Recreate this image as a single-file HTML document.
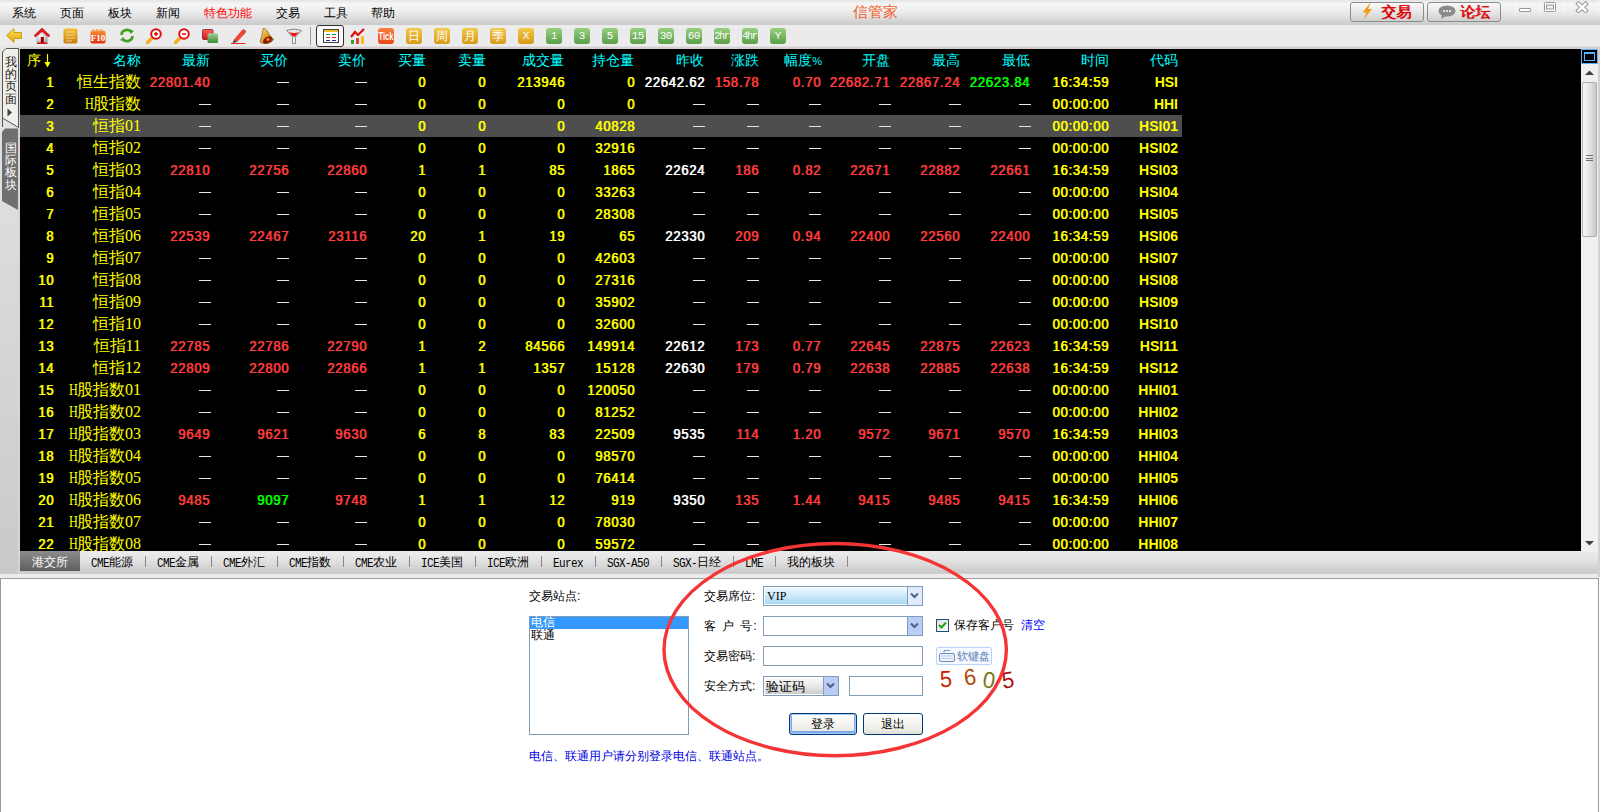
<!DOCTYPE html><html><head><meta charset="utf-8"><style>
*{margin:0;padding:0;box-sizing:border-box}
html,body{width:1600px;height:812px;overflow:hidden;background:#ebebeb;font-family:"Liberation Sans",sans-serif;font-size:12px;color:#000}
.a{position:absolute;white-space:nowrap}
.r{position:absolute;white-space:nowrap;text-align:right}
.num{font-family:"Liberation Sans",sans-serif;font-size:13px;letter-spacing:0.77px;transform:scaleY(1.1);transform-origin:100% 55%}
.dot{margin:0}
.cd{font-family:"Liberation Sans",sans-serif;font-weight:bold;font-size:14px}
.lt{font-family:"Liberation Serif",serif}
.hh{display:inline-block;width:8.5px}
.hh span{display:inline-block;transform:scaleX(0.76);transform-origin:0 50%}
.tl{font-family:"Liberation Mono",monospace;font-size:11px;letter-spacing:-0.6px;display:inline-block;transform:scaleY(1.2);font-weight:normal}
.nm{font-size:16px}
.dash{position:absolute;width:12px;height:1px;background:#e6e6e6}
.hd{font-size:14px;color:#00ffff}
</style></head><body>
<div class="a" style="left:0;top:0;width:1600px;height:25px;background:linear-gradient(#e4e4e4 0px,#f6f6f6 4px,#ececec 12px,#cacaca 25px)"></div>
<div class="a" style="left:12px;top:5px;line-height:16px;font-size:12px;color:#000">系统</div>
<div class="a" style="left:60px;top:5px;line-height:16px;font-size:12px;color:#000">页面</div>
<div class="a" style="left:108px;top:5px;line-height:16px;font-size:12px;color:#000">板块</div>
<div class="a" style="left:156px;top:5px;line-height:16px;font-size:12px;color:#000">新闻</div>
<div class="a" style="left:204px;top:5px;line-height:16px;font-size:12px;color:#ff0000">特色功能</div>
<div class="a" style="left:276px;top:5px;line-height:16px;font-size:12px;color:#000">交易</div>
<div class="a" style="left:324px;top:5px;line-height:16px;font-size:12px;color:#000">工具</div>
<div class="a" style="left:371px;top:5px;line-height:16px;font-size:12px;color:#000">帮助</div>
<div class="a" style="left:853px;top:3px;line-height:18px;font-size:15.4px;color:#f0602a">信管家</div>
<div class="a" style="left:1350px;top:2px;width:74px;height:20px;border:1px solid #8c8c8c;border-radius:3px;background:linear-gradient(#fafafa,#e6e6e6 50%,#cfcfcf)"></div>
<svg class="a" style="left:1361px;top:3px" width="12" height="17" viewBox="0 0 12 17"><path d="M9 0 L1.5 9.5 L5.5 9.5 L2.5 16.5 L11 6 L7 6 L9.5 0 Z" fill="#f59a1a"/></svg>
<div class="a" style="left:1381px;top:3px;line-height:18px;font-size:15px;font-weight:normal;color:#dd0000;text-shadow:0.6px 0 0 #dd0000;letter-spacing:0px">交易</div>
<div class="a" style="left:1427px;top:2px;width:74px;height:20px;border:1px solid #8c8c8c;border-radius:3px;background:linear-gradient(#fafafa,#e6e6e6 50%,#cfcfcf)"></div>
<svg class="a" style="left:1438px;top:5px" width="18" height="14" viewBox="0 0 18 14"><ellipse cx="9" cy="6" rx="8.5" ry="5.5" fill="#8a8a8a"/><path d="M4 10 L3 14 L8 11 Z" fill="#8a8a8a"/><circle cx="6" cy="6" r="1" fill="#fff"/><circle cx="9" cy="6" r="1" fill="#fff"/><circle cx="12" cy="6" r="1" fill="#fff"/></svg>
<div class="a" style="left:1460px;top:3px;line-height:18px;font-size:15px;font-weight:normal;color:#dd0000;text-shadow:0.6px 0 0 #dd0000;letter-spacing:0px">论坛</div>
<div class="a" style="left:1515px;top:0;width:1px;height:19px;background:linear-gradient(#fafafa,#f0f0f0 70%,rgba(240,240,240,0))"></div>
<div class="a" style="left:1539px;top:0;width:1px;height:19px;background:linear-gradient(#fafafa,#f0f0f0 70%,rgba(240,240,240,0))"></div>
<div class="a" style="left:1564px;top:0;width:1px;height:19px;background:linear-gradient(#fafafa,#f0f0f0 70%,rgba(240,240,240,0))"></div>
<div class="a" style="left:1598px;top:0;width:1px;height:19px;background:linear-gradient(#fafafa,#f0f0f0 70%,rgba(240,240,240,0))"></div>
<div class="a" style="left:1519px;top:8px;width:12px;height:4px;border:1px solid #999;border-radius:1px;background:#fff"></div>
<svg class="a" style="left:1543px;top:1px" width="14" height="12" viewBox="0 0 14 12"><rect x="1.5" y="1.5" width="11" height="9" rx="0.8" fill="#fff" stroke="#999" stroke-width="1"/><rect x="3.5" y="4" width="7" height="4" fill="#eee" stroke="#999" stroke-width="1"/></svg>
<svg class="a" style="left:1575px;top:1px" width="14" height="12" viewBox="0 0 14 12"><path d="M3.5 3 L10.5 9.5 M10.5 3 L3.5 9.5" stroke="#999" stroke-width="4.6" stroke-linecap="square"/><path d="M3.5 3 L10.5 9.5 M10.5 3 L3.5 9.5" stroke="#fff" stroke-width="2.6" stroke-linecap="square"/></svg>
<div class="a" style="left:0;top:25px;width:1600px;height:22px;background:#ebebeb"></div>
<div class="a" style="left:0;top:46px;width:1600px;height:1px;background:#e2e2e2"></div>
<div class="a" style="left:0;top:47px;width:1600px;height:2px;background:#d6cece"></div>
<svg class="a" style="left:6px;top:28px" width="16" height="16" viewBox="0 0 16 16"><defs><linearGradient id="gy" x1="0" y1="0" x2="0" y2="1"><stop offset="0" stop-color="#ffe060"/><stop offset="1" stop-color="#e0a800"/></linearGradient></defs><path d="M0.5 7.5 L8 0.5 L8 4.5 L15.5 4.5 L15.5 10.5 L8 10.5 L8 14.5 Z" fill="url(#gy)" stroke="#c89000" stroke-width="0.8"/></svg>
<svg class="a" style="left:34px;top:28px" width="16" height="16" viewBox="0 0 16 16"><defs><radialGradient id="hw" cx="0.4" cy="0.4" r="0.7"><stop offset="0" stop-color="#ffffff"/><stop offset="1" stop-color="#a8a8a8"/></radialGradient></defs><path d="M2.5 8 L8 3 L13.5 8 L13.5 15 L2.5 15 Z" fill="url(#hw)"/><path d="M0 7.5 L8 0 L16 7.5 L14.5 9 L8 3.5 L1.5 9 Z" fill="#e41c1c" stroke="#b00000" stroke-width="0.5"/><rect x="6.8" y="9" width="3" height="6" fill="#a00000"/><path d="M3 14.5 H13.5 V16 H3Z" fill="#d01818"/></svg>
<svg class="a" style="left:63px;top:28px" width="16" height="16" viewBox="0 0 16 16"><defs><linearGradient id="go" x1="0" y1="0" x2="0" y2="1"><stop offset="0" stop-color="#f4c030"/><stop offset="1" stop-color="#c87a10"/></linearGradient></defs><rect x="0.5" y="0.5" width="14" height="15" rx="2" fill="url(#go)"/><path d="M3 4h9M3 7h9M3 10h9M3 13h6" stroke="#fff6d0" stroke-width="0.8" opacity="0.8"/></svg>
<svg class="a" style="left:90px;top:28px" width="16" height="16" viewBox="0 0 16 16"><defs><linearGradient id="gr" x1="0" y1="0" x2="0" y2="1"><stop offset="0" stop-color="#f89030"/><stop offset="1" stop-color="#e03010"/></linearGradient></defs><rect x="0.5" y="2.5" width="15" height="13" rx="2" fill="url(#gr)"/><path d="M3 1v3M7 1v3M11 1v3" stroke="#f0a040" stroke-width="1.4"/><text x="8" y="13" font-family="Liberation Serif" font-weight="bold" font-size="9" fill="#fff" text-anchor="middle">F10</text></svg>
<svg class="a" style="left:119px;top:28px" width="16" height="16" viewBox="0 0 16 16"><path d="M2.5 7 A5.5 5 0 0 1 12 3.5" stroke="#40a020" stroke-width="2.6" fill="none"/><path d="M13.5 8 A5.5 5 0 0 1 4 11.5" stroke="#40a020" stroke-width="2.6" fill="none"/><path d="M10 1 L15 3 L11.5 6Z" fill="#40a020"/><path d="M6 14 L1 12 L4.5 9Z" fill="#40a020"/></svg>
<svg class="a" style="left:146px;top:28px" width="16" height="16" viewBox="0 0 16 16"><path d="M1 15 L6 10" stroke="#f0b020" stroke-width="3.5" stroke-linecap="round"/><circle cx="10" cy="6" r="4.8" fill="#fff" stroke="#e01010" stroke-width="2"/><path d="M8 6h4" stroke="#e01010" stroke-width="1.6"/><path d="M10 4v4" stroke="#e01010" stroke-width="1.6"/></svg>
<svg class="a" style="left:174px;top:28px" width="16" height="16" viewBox="0 0 16 16"><path d="M1 15 L6 10" stroke="#f0b020" stroke-width="3.5" stroke-linecap="round"/><circle cx="10" cy="6" r="4.8" fill="#fff" stroke="#e01010" stroke-width="2"/><path d="M8 6h4" stroke="#e01010" stroke-width="1.6"/></svg>
<svg class="a" style="left:202px;top:29px" width="17" height="15" viewBox="0 0 17 15"><defs><linearGradient id="wr" x1="0" y1="0" x2="0" y2="1"><stop offset="0" stop-color="#ff6060"/><stop offset="1" stop-color="#d01010"/></linearGradient><linearGradient id="wg" x1="0" y1="0" x2="0" y2="1"><stop offset="0" stop-color="#a8d098"/><stop offset="1" stop-color="#3a8a30"/></linearGradient></defs><rect x="0.5" y="0.5" width="10.5" height="10" rx="1" fill="url(#wr)" stroke="#801010" stroke-width="0.7"/><rect x="5.5" y="4.2" width="10.5" height="9.8" rx="1.5" fill="url(#wg)"/></svg>
<svg class="a" style="left:231px;top:28px" width="16" height="16" viewBox="0 0 16 16"><path d="M3 12 L11.5 2 Q12.5 1 13.5 2 L14.5 3 Q15 4 14 5 L5.5 14 Z" fill="#f04838" stroke="#d02010" stroke-width="0.6"/><path d="M3 12 L5.5 14 L1.5 15 Z" fill="#303040"/><rect x="0" y="15" width="14.5" height="1" fill="#ff2020"/></svg>
<svg class="a" style="left:259px;top:28px" width="16" height="16" viewBox="0 0 16 16"><defs><linearGradient id="gb" x1="0" y1="0" x2="1" y2="1"><stop offset="0" stop-color="#ffe070"/><stop offset="0.6" stop-color="#d89020"/><stop offset="1" stop-color="#803000"/></linearGradient></defs><path d="M4 0.5 L6 0.5 Q8 2 10 6 L14.5 11.5 Q12 16 4 15.5 L1 14 Q3 8 4 0.5Z" fill="url(#gb)" stroke="#604000" stroke-width="0.5"/><ellipse cx="8.5" cy="12" rx="5" ry="3" transform="rotate(-35 8.5 12)" fill="#901800"/><circle cx="9" cy="11.5" r="1.4" fill="#f0a030"/></svg>
<svg class="a" style="left:286px;top:28px" width="16" height="16" viewBox="0 0 16 16"><path d="M0.5 2.5 Q8 -0.5 15.5 2.5 L9.5 9 L9.5 15.5 L6.5 15.5 L6.5 9 Z" fill="#e8e8e8" stroke="#707070" stroke-width="0.8"/><path d="M3 4 Q8 6 13 4 L9 8.5 L7 8.5Z" fill="#f01010"/><rect x="7.3" y="9" width="1.4" height="6" fill="#ffffff"/></svg>
<div class="a" style="left:310px;top:27px;width:1px;height:18px;background:#9a9a9a"></div>
<div class="a" style="left:316px;top:25px;width:28px;height:22px;border:1px solid #303030;border-radius:3px;background:#fafafa"></div>
<svg class="a" style="left:323px;top:29px" width="16" height="15" viewBox="0 0 16 15"><rect x="0.5" y="0.5" width="15" height="13" fill="#fff" stroke="#404040" stroke-width="1"/><rect x="1" y="1" width="14" height="2" fill="#f0c020"/><path d="M3 5.5h4M9 5.5h4" stroke="#20a020" stroke-width="1"/><path d="M3 8.5h4M9 8.5h4" stroke="#e02020" stroke-width="1"/><path d="M3 11.5h4M9 11.5h4" stroke="#2030a0" stroke-width="1"/></svg>
<svg class="a" style="left:350px;top:28px" width="16" height="16" viewBox="0 0 16 16"><path d="M1 9 L5 4 L8 7 L14 1" stroke="#e01010" stroke-width="2.2" fill="none"/><rect x="1" y="12" width="3" height="4" fill="#30a030"/><rect x="6" y="10" width="3" height="6" fill="#e04040"/><rect x="11" y="8" width="3" height="8" fill="#f0c020"/></svg>
<svg class="a" style="left:378px;top:28px" width="16" height="16" viewBox="0 0 16 16"><defs><linearGradient id="gt" x1="0" y1="0" x2="0" y2="1"><stop offset="0" stop-color="#f88040"/><stop offset="1" stop-color="#e84818"/></linearGradient></defs><rect x="0" y="0" width="16" height="16" rx="3" fill="url(#gt)"/><text x="8" y="12" font-family="Liberation Sans" font-weight="bold" font-size="10" fill="#fff" text-anchor="middle" textLength="15" lengthAdjust="spacingAndGlyphs">Tick</text></svg>
<div class="a" style="left:406px;top:28px;width:16px;height:16px;border-radius:3px;background:linear-gradient(#f2c848,#d89a18);color:#fff;font-family:'Liberation Sans';font-size:12px;line-height:16px;overflow:hidden;text-align:center;letter-spacing:0;text-indent:0">日</div>
<div class="a" style="left:434px;top:28px;width:16px;height:16px;border-radius:3px;background:linear-gradient(#f2c848,#d89a18);color:#fff;font-family:'Liberation Sans';font-size:12px;line-height:16px;overflow:hidden;text-align:center;letter-spacing:0;text-indent:0">周</div>
<div class="a" style="left:462px;top:28px;width:16px;height:16px;border-radius:3px;background:linear-gradient(#f2c848,#d89a18);color:#fff;font-family:'Liberation Sans';font-size:12px;line-height:16px;overflow:hidden;text-align:center;letter-spacing:0;text-indent:0">月</div>
<div class="a" style="left:490px;top:28px;width:16px;height:16px;border-radius:3px;background:linear-gradient(#f2c848,#d89a18);color:#fff;font-family:'Liberation Sans';font-size:12px;line-height:16px;overflow:hidden;text-align:center;letter-spacing:0;text-indent:0">季</div>
<div class="a" style="left:518px;top:28px;width:16px;height:16px;border-radius:3px;background:linear-gradient(#f2c848,#d89a18);color:#fff;font-family:'Liberation Mono';font-size:11px;line-height:16px;overflow:hidden;text-align:center;letter-spacing:-0.6px;text-indent:-0.6px">X</div>
<div class="a" style="left:546px;top:28px;width:16px;height:16px;border-radius:3px;background:linear-gradient(#98d080,#5a9e48);color:#fff;font-family:'Liberation Mono';font-size:11px;line-height:16px;overflow:hidden;text-align:center;letter-spacing:-0.6px;text-indent:-0.6px">1</div>
<div class="a" style="left:574px;top:28px;width:16px;height:16px;border-radius:3px;background:linear-gradient(#98d080,#5a9e48);color:#fff;font-family:'Liberation Mono';font-size:11px;line-height:16px;overflow:hidden;text-align:center;letter-spacing:-0.6px;text-indent:-0.6px">3</div>
<div class="a" style="left:602px;top:28px;width:16px;height:16px;border-radius:3px;background:linear-gradient(#98d080,#5a9e48);color:#fff;font-family:'Liberation Mono';font-size:11px;line-height:16px;overflow:hidden;text-align:center;letter-spacing:-0.6px;text-indent:-0.6px">5</div>
<div class="a" style="left:630px;top:28px;width:16px;height:16px;border-radius:3px;background:linear-gradient(#98d080,#5a9e48);color:#fff;font-family:'Liberation Mono';font-size:11px;line-height:16px;overflow:hidden;text-align:center;letter-spacing:-0.6px;text-indent:-0.6px">15</div>
<div class="a" style="left:658px;top:28px;width:16px;height:16px;border-radius:3px;background:linear-gradient(#98d080,#5a9e48);color:#fff;font-family:'Liberation Mono';font-size:11px;line-height:16px;overflow:hidden;text-align:center;letter-spacing:-0.6px;text-indent:-0.6px">30</div>
<div class="a" style="left:686px;top:28px;width:16px;height:16px;border-radius:3px;background:linear-gradient(#98d080,#5a9e48);color:#fff;font-family:'Liberation Mono';font-size:11px;line-height:16px;overflow:hidden;text-align:center;letter-spacing:-0.6px;text-indent:-0.6px">60</div>
<div class="a" style="left:714px;top:28px;width:16px;height:16px;border-radius:3px;background:linear-gradient(#98d080,#5a9e48);color:#fff;font-family:'Liberation Mono';font-size:10px;line-height:18px;overflow:hidden;text-align:center;letter-spacing:-1.3px;text-indent:-1.3px">2hr</div>
<div class="a" style="left:742px;top:28px;width:16px;height:16px;border-radius:3px;background:linear-gradient(#98d080,#5a9e48);color:#fff;font-family:'Liberation Mono';font-size:10px;line-height:18px;overflow:hidden;text-align:center;letter-spacing:-1.3px;text-indent:-1.3px">4hr</div>
<div class="a" style="left:770px;top:28px;width:16px;height:16px;border-radius:3px;background:linear-gradient(#98d080,#5a9e48);color:#fff;font-family:'Liberation Mono';font-size:11px;line-height:16px;overflow:hidden;text-align:center;letter-spacing:-0.6px;text-indent:-0.6px">Y</div>
<div class="a" style="left:0;top:47px;width:19px;height:528px;background:linear-gradient(#e6e6e6,#dcdcdc 35%,#c9c9c9)"></div>
<div class="a" style="left:18px;top:47px;width:2px;height:528px;background:#dcd2d2"></div>
<svg class="a" style="left:1px;top:47px" width="18" height="82" viewBox="0 0 18 82"><path d="M1.5 80 L1.5 5 L5 1.5 L17.5 1.5 L17.5 80.5 L1.5 71 Z" fill="#f0efe8" stroke="#555" stroke-width="1"/></svg>
<div class="a" style="left:5px;top:56px;width:12px;font-size:12px;line-height:12.2px;color:#1a1a1a;white-space:normal;word-break:break-all">我的页面</div>
<svg class="a" style="left:7px;top:108px" width="6" height="9" viewBox="0 0 6 9"><path d="M0.5 0.5 L5 4.5 L0.5 8.5Z" fill="#404040"/></svg>
<svg class="a" style="left:1px;top:128px" width="18" height="84" viewBox="0 0 18 84"><path d="M1 4 L4 0.5 L17 0.5 L17 82 L1 73 Z" fill="#6f6f6f"/></svg>
<div class="a" style="left:5px;top:142px;width:12px;font-size:12px;line-height:12.2px;color:#fff;white-space:normal;word-break:break-all">国际板块</div>
<div class="a" style="left:20px;top:49px;width:1578px;height:502px;background:#000"></div>
<div class="a" style="left:1598px;top:47px;width:2px;height:530px;background:#d8d0d0"></div>
<div class="a" style="left:20px;top:115px;width:1162px;height:22px;background:#4e4e4e"></div>
<div class="a hd" style="left:27px;top:50px;line-height:20px;color:#ffff00">序</div>
<svg class="a" style="left:44px;top:54px" width="7" height="14" viewBox="0 0 7 14"><path d="M3.5 0 V12" stroke="#ffff00" stroke-width="1.2"/><path d="M0.5 8 L3.5 13.5 L6.5 8Z" fill="#ffff00"/></svg>
<div class="r hd" style="right:1459px;top:50px;line-height:20px">名称</div>
<div class="r hd" style="right:1390px;top:50px;line-height:20px">最新</div>
<div class="r hd" style="right:1312px;top:50px;line-height:20px">买价</div>
<div class="r hd" style="right:1234px;top:50px;line-height:20px">卖价</div>
<div class="r hd" style="right:1174px;top:50px;line-height:20px">买量</div>
<div class="r hd" style="right:1114px;top:50px;line-height:20px">卖量</div>
<div class="r hd" style="right:1036px;top:50px;line-height:20px">成交量</div>
<div class="r hd" style="right:966px;top:50px;line-height:20px">持仓量</div>
<div class="r hd" style="right:896px;top:50px;line-height:20px">昨收</div>
<div class="r hd" style="right:841px;top:50px;line-height:20px">涨跌</div>
<div class="r hd" style="right:779px;top:50px;line-height:20px">幅度<span style="font-size:11px;letter-spacing:-1px">%</span></div>
<div class="r hd" style="right:710px;top:50px;line-height:20px">开盘</div>
<div class="r hd" style="right:640px;top:50px;line-height:20px">最高</div>
<div class="r hd" style="right:570px;top:50px;line-height:20px">最低</div>
<div class="r hd" style="right:491px;top:50px;line-height:20px">时间</div>
<div class="r hd" style="right:422px;top:50px;line-height:20px">代码</div>
<div class="r num" style="right:1546px;top:72px;line-height:22px;color:#ffff00;text-shadow:0.7px 0 0 #ffff00">1</div>
<div class="r nm" style="right:1459px;top:71px;line-height:22px;color:#ffff00">恒生指数</div>
<div class="r num" style="right:1390px;top:72px;line-height:22px;color:#ff3c3c;text-shadow:0.7px 0 0 #ff3c3c">22801.40</div>
<div class="dash" style="left:277px;top:82px"></div>
<div class="dash" style="left:355px;top:82px"></div>
<div class="r num" style="right:1174px;top:72px;line-height:22px;color:#ffff00;text-shadow:0.7px 0 0 #ffff00">0</div>
<div class="r num" style="right:1114px;top:72px;line-height:22px;color:#ffff00;text-shadow:0.7px 0 0 #ffff00">0</div>
<div class="r num" style="right:1035px;top:72px;line-height:22px;color:#ffff00;text-shadow:0.7px 0 0 #ffff00">213946</div>
<div class="r num" style="right:965px;top:72px;line-height:22px;color:#ffff00;text-shadow:0.7px 0 0 #ffff00">0</div>
<div class="r num" style="right:895px;top:72px;line-height:22px;color:#ffffff;text-shadow:0.7px 0 0 #ffffff">22642.62</div>
<div class="r num" style="right:841px;top:72px;line-height:22px;color:#ff3c3c;text-shadow:0.7px 0 0 #ff3c3c">158.78</div>
<div class="r num" style="right:779px;top:72px;line-height:22px;color:#ff3c3c;text-shadow:0.7px 0 0 #ff3c3c">0.70</div>
<div class="r num" style="right:710px;top:72px;line-height:22px;color:#ff3c3c;text-shadow:0.7px 0 0 #ff3c3c">22682.71</div>
<div class="r num" style="right:640px;top:72px;line-height:22px;color:#ff3c3c;text-shadow:0.7px 0 0 #ff3c3c">22867.24</div>
<div class="r num" style="right:570px;top:72px;line-height:22px;color:#00ff00;text-shadow:0.7px 0 0 #00ff00">22623.84</div>
<div class="r num" style="right:491px;top:72px;line-height:22px;color:#ffff00;text-shadow:0.7px 0 0 #ffff00">16:34:59</div>
<div class="r cd" style="right:422px;top:71px;line-height:22px;color:#ffff00">HSI</div>
<div class="r num" style="right:1546px;top:94px;line-height:22px;color:#ffff00;text-shadow:0.7px 0 0 #ffff00">2</div>
<div class="r nm" style="right:1459px;top:93px;line-height:22px;color:#ffff00"><span class="lt hh"><span>H</span></span>股指数</div>
<div class="dash" style="left:199px;top:104px"></div>
<div class="dash" style="left:277px;top:104px"></div>
<div class="dash" style="left:355px;top:104px"></div>
<div class="r num" style="right:1174px;top:94px;line-height:22px;color:#ffff00;text-shadow:0.7px 0 0 #ffff00">0</div>
<div class="r num" style="right:1114px;top:94px;line-height:22px;color:#ffff00;text-shadow:0.7px 0 0 #ffff00">0</div>
<div class="r num" style="right:1035px;top:94px;line-height:22px;color:#ffff00;text-shadow:0.7px 0 0 #ffff00">0</div>
<div class="r num" style="right:965px;top:94px;line-height:22px;color:#ffff00;text-shadow:0.7px 0 0 #ffff00">0</div>
<div class="dash" style="left:693px;top:104px"></div>
<div class="dash" style="left:747px;top:104px"></div>
<div class="dash" style="left:809px;top:104px"></div>
<div class="dash" style="left:879px;top:104px"></div>
<div class="dash" style="left:949px;top:104px"></div>
<div class="dash" style="left:1019px;top:104px"></div>
<div class="r num" style="right:491px;top:94px;line-height:22px;color:#ffff00;text-shadow:0.7px 0 0 #ffff00">00:00:00</div>
<div class="r cd" style="right:422px;top:93px;line-height:22px;color:#ffff00">HHI</div>
<div class="r num" style="right:1546px;top:116px;line-height:22px;color:#ffff00;text-shadow:0.7px 0 0 #ffff00">3</div>
<div class="r nm" style="right:1459px;top:115px;line-height:22px;color:#ffff00">恒指<span class="lt">01</span></div>
<div class="dash" style="left:199px;top:126px"></div>
<div class="dash" style="left:277px;top:126px"></div>
<div class="dash" style="left:355px;top:126px"></div>
<div class="r num" style="right:1174px;top:116px;line-height:22px;color:#ffff00;text-shadow:0.7px 0 0 #ffff00">0</div>
<div class="r num" style="right:1114px;top:116px;line-height:22px;color:#ffff00;text-shadow:0.7px 0 0 #ffff00">0</div>
<div class="r num" style="right:1035px;top:116px;line-height:22px;color:#ffff00;text-shadow:0.7px 0 0 #ffff00">0</div>
<div class="r num" style="right:965px;top:116px;line-height:22px;color:#ffff00;text-shadow:0.7px 0 0 #ffff00">40828</div>
<div class="dash" style="left:693px;top:126px"></div>
<div class="dash" style="left:747px;top:126px"></div>
<div class="dash" style="left:809px;top:126px"></div>
<div class="dash" style="left:879px;top:126px"></div>
<div class="dash" style="left:949px;top:126px"></div>
<div class="dash" style="left:1019px;top:126px"></div>
<div class="r num" style="right:491px;top:116px;line-height:22px;color:#ffff00;text-shadow:0.7px 0 0 #ffff00">00:00:00</div>
<div class="r cd" style="right:422px;top:115px;line-height:22px;color:#ffff00">HSI01</div>
<div class="r num" style="right:1546px;top:138px;line-height:22px;color:#ffff00;text-shadow:0.7px 0 0 #ffff00">4</div>
<div class="r nm" style="right:1459px;top:137px;line-height:22px;color:#ffff00">恒指<span class="lt">02</span></div>
<div class="dash" style="left:199px;top:148px"></div>
<div class="dash" style="left:277px;top:148px"></div>
<div class="dash" style="left:355px;top:148px"></div>
<div class="r num" style="right:1174px;top:138px;line-height:22px;color:#ffff00;text-shadow:0.7px 0 0 #ffff00">0</div>
<div class="r num" style="right:1114px;top:138px;line-height:22px;color:#ffff00;text-shadow:0.7px 0 0 #ffff00">0</div>
<div class="r num" style="right:1035px;top:138px;line-height:22px;color:#ffff00;text-shadow:0.7px 0 0 #ffff00">0</div>
<div class="r num" style="right:965px;top:138px;line-height:22px;color:#ffff00;text-shadow:0.7px 0 0 #ffff00">32916</div>
<div class="dash" style="left:693px;top:148px"></div>
<div class="dash" style="left:747px;top:148px"></div>
<div class="dash" style="left:809px;top:148px"></div>
<div class="dash" style="left:879px;top:148px"></div>
<div class="dash" style="left:949px;top:148px"></div>
<div class="dash" style="left:1019px;top:148px"></div>
<div class="r num" style="right:491px;top:138px;line-height:22px;color:#ffff00;text-shadow:0.7px 0 0 #ffff00">00:00:00</div>
<div class="r cd" style="right:422px;top:137px;line-height:22px;color:#ffff00">HSI02</div>
<div class="r num" style="right:1546px;top:160px;line-height:22px;color:#ffff00;text-shadow:0.7px 0 0 #ffff00">5</div>
<div class="r nm" style="right:1459px;top:159px;line-height:22px;color:#ffff00">恒指<span class="lt">03</span></div>
<div class="r num" style="right:1390px;top:160px;line-height:22px;color:#ff3c3c;text-shadow:0.7px 0 0 #ff3c3c">22810</div>
<div class="r num" style="right:1311px;top:160px;line-height:22px;color:#ff3c3c;text-shadow:0.7px 0 0 #ff3c3c">22756</div>
<div class="r num" style="right:1233px;top:160px;line-height:22px;color:#ff3c3c;text-shadow:0.7px 0 0 #ff3c3c">22860</div>
<div class="r num" style="right:1174px;top:160px;line-height:22px;color:#ffff00;text-shadow:0.7px 0 0 #ffff00">1</div>
<div class="r num" style="right:1114px;top:160px;line-height:22px;color:#ffff00;text-shadow:0.7px 0 0 #ffff00">1</div>
<div class="r num" style="right:1035px;top:160px;line-height:22px;color:#ffff00;text-shadow:0.7px 0 0 #ffff00">85</div>
<div class="r num" style="right:965px;top:160px;line-height:22px;color:#ffff00;text-shadow:0.7px 0 0 #ffff00">1865</div>
<div class="r num" style="right:895px;top:160px;line-height:22px;color:#ffffff;text-shadow:0.7px 0 0 #ffffff">22624</div>
<div class="r num" style="right:841px;top:160px;line-height:22px;color:#ff3c3c;text-shadow:0.7px 0 0 #ff3c3c">186</div>
<div class="r num" style="right:779px;top:160px;line-height:22px;color:#ff3c3c;text-shadow:0.7px 0 0 #ff3c3c">0.82</div>
<div class="r num" style="right:710px;top:160px;line-height:22px;color:#ff3c3c;text-shadow:0.7px 0 0 #ff3c3c">22671</div>
<div class="r num" style="right:640px;top:160px;line-height:22px;color:#ff3c3c;text-shadow:0.7px 0 0 #ff3c3c">22882</div>
<div class="r num" style="right:570px;top:160px;line-height:22px;color:#ff3c3c;text-shadow:0.7px 0 0 #ff3c3c">22661</div>
<div class="r num" style="right:491px;top:160px;line-height:22px;color:#ffff00;text-shadow:0.7px 0 0 #ffff00">16:34:59</div>
<div class="r cd" style="right:422px;top:159px;line-height:22px;color:#ffff00">HSI03</div>
<div class="r num" style="right:1546px;top:182px;line-height:22px;color:#ffff00;text-shadow:0.7px 0 0 #ffff00">6</div>
<div class="r nm" style="right:1459px;top:181px;line-height:22px;color:#ffff00">恒指<span class="lt">04</span></div>
<div class="dash" style="left:199px;top:192px"></div>
<div class="dash" style="left:277px;top:192px"></div>
<div class="dash" style="left:355px;top:192px"></div>
<div class="r num" style="right:1174px;top:182px;line-height:22px;color:#ffff00;text-shadow:0.7px 0 0 #ffff00">0</div>
<div class="r num" style="right:1114px;top:182px;line-height:22px;color:#ffff00;text-shadow:0.7px 0 0 #ffff00">0</div>
<div class="r num" style="right:1035px;top:182px;line-height:22px;color:#ffff00;text-shadow:0.7px 0 0 #ffff00">0</div>
<div class="r num" style="right:965px;top:182px;line-height:22px;color:#ffff00;text-shadow:0.7px 0 0 #ffff00">33263</div>
<div class="dash" style="left:693px;top:192px"></div>
<div class="dash" style="left:747px;top:192px"></div>
<div class="dash" style="left:809px;top:192px"></div>
<div class="dash" style="left:879px;top:192px"></div>
<div class="dash" style="left:949px;top:192px"></div>
<div class="dash" style="left:1019px;top:192px"></div>
<div class="r num" style="right:491px;top:182px;line-height:22px;color:#ffff00;text-shadow:0.7px 0 0 #ffff00">00:00:00</div>
<div class="r cd" style="right:422px;top:181px;line-height:22px;color:#ffff00">HSI04</div>
<div class="r num" style="right:1546px;top:204px;line-height:22px;color:#ffff00;text-shadow:0.7px 0 0 #ffff00">7</div>
<div class="r nm" style="right:1459px;top:203px;line-height:22px;color:#ffff00">恒指<span class="lt">05</span></div>
<div class="dash" style="left:199px;top:214px"></div>
<div class="dash" style="left:277px;top:214px"></div>
<div class="dash" style="left:355px;top:214px"></div>
<div class="r num" style="right:1174px;top:204px;line-height:22px;color:#ffff00;text-shadow:0.7px 0 0 #ffff00">0</div>
<div class="r num" style="right:1114px;top:204px;line-height:22px;color:#ffff00;text-shadow:0.7px 0 0 #ffff00">0</div>
<div class="r num" style="right:1035px;top:204px;line-height:22px;color:#ffff00;text-shadow:0.7px 0 0 #ffff00">0</div>
<div class="r num" style="right:965px;top:204px;line-height:22px;color:#ffff00;text-shadow:0.7px 0 0 #ffff00">28308</div>
<div class="dash" style="left:693px;top:214px"></div>
<div class="dash" style="left:747px;top:214px"></div>
<div class="dash" style="left:809px;top:214px"></div>
<div class="dash" style="left:879px;top:214px"></div>
<div class="dash" style="left:949px;top:214px"></div>
<div class="dash" style="left:1019px;top:214px"></div>
<div class="r num" style="right:491px;top:204px;line-height:22px;color:#ffff00;text-shadow:0.7px 0 0 #ffff00">00:00:00</div>
<div class="r cd" style="right:422px;top:203px;line-height:22px;color:#ffff00">HSI05</div>
<div class="r num" style="right:1546px;top:226px;line-height:22px;color:#ffff00;text-shadow:0.7px 0 0 #ffff00">8</div>
<div class="r nm" style="right:1459px;top:225px;line-height:22px;color:#ffff00">恒指<span class="lt">06</span></div>
<div class="r num" style="right:1390px;top:226px;line-height:22px;color:#ff3c3c;text-shadow:0.7px 0 0 #ff3c3c">22539</div>
<div class="r num" style="right:1311px;top:226px;line-height:22px;color:#ff3c3c;text-shadow:0.7px 0 0 #ff3c3c">22467</div>
<div class="r num" style="right:1233px;top:226px;line-height:22px;color:#ff3c3c;text-shadow:0.7px 0 0 #ff3c3c">23116</div>
<div class="r num" style="right:1174px;top:226px;line-height:22px;color:#ffff00;text-shadow:0.7px 0 0 #ffff00">20</div>
<div class="r num" style="right:1114px;top:226px;line-height:22px;color:#ffff00;text-shadow:0.7px 0 0 #ffff00">1</div>
<div class="r num" style="right:1035px;top:226px;line-height:22px;color:#ffff00;text-shadow:0.7px 0 0 #ffff00">19</div>
<div class="r num" style="right:965px;top:226px;line-height:22px;color:#ffff00;text-shadow:0.7px 0 0 #ffff00">65</div>
<div class="r num" style="right:895px;top:226px;line-height:22px;color:#ffffff;text-shadow:0.7px 0 0 #ffffff">22330</div>
<div class="r num" style="right:841px;top:226px;line-height:22px;color:#ff3c3c;text-shadow:0.7px 0 0 #ff3c3c">209</div>
<div class="r num" style="right:779px;top:226px;line-height:22px;color:#ff3c3c;text-shadow:0.7px 0 0 #ff3c3c">0.94</div>
<div class="r num" style="right:710px;top:226px;line-height:22px;color:#ff3c3c;text-shadow:0.7px 0 0 #ff3c3c">22400</div>
<div class="r num" style="right:640px;top:226px;line-height:22px;color:#ff3c3c;text-shadow:0.7px 0 0 #ff3c3c">22560</div>
<div class="r num" style="right:570px;top:226px;line-height:22px;color:#ff3c3c;text-shadow:0.7px 0 0 #ff3c3c">22400</div>
<div class="r num" style="right:491px;top:226px;line-height:22px;color:#ffff00;text-shadow:0.7px 0 0 #ffff00">16:34:59</div>
<div class="r cd" style="right:422px;top:225px;line-height:22px;color:#ffff00">HSI06</div>
<div class="r num" style="right:1546px;top:248px;line-height:22px;color:#ffff00;text-shadow:0.7px 0 0 #ffff00">9</div>
<div class="r nm" style="right:1459px;top:247px;line-height:22px;color:#ffff00">恒指<span class="lt">07</span></div>
<div class="dash" style="left:199px;top:258px"></div>
<div class="dash" style="left:277px;top:258px"></div>
<div class="dash" style="left:355px;top:258px"></div>
<div class="r num" style="right:1174px;top:248px;line-height:22px;color:#ffff00;text-shadow:0.7px 0 0 #ffff00">0</div>
<div class="r num" style="right:1114px;top:248px;line-height:22px;color:#ffff00;text-shadow:0.7px 0 0 #ffff00">0</div>
<div class="r num" style="right:1035px;top:248px;line-height:22px;color:#ffff00;text-shadow:0.7px 0 0 #ffff00">0</div>
<div class="r num" style="right:965px;top:248px;line-height:22px;color:#ffff00;text-shadow:0.7px 0 0 #ffff00">42603</div>
<div class="dash" style="left:693px;top:258px"></div>
<div class="dash" style="left:747px;top:258px"></div>
<div class="dash" style="left:809px;top:258px"></div>
<div class="dash" style="left:879px;top:258px"></div>
<div class="dash" style="left:949px;top:258px"></div>
<div class="dash" style="left:1019px;top:258px"></div>
<div class="r num" style="right:491px;top:248px;line-height:22px;color:#ffff00;text-shadow:0.7px 0 0 #ffff00">00:00:00</div>
<div class="r cd" style="right:422px;top:247px;line-height:22px;color:#ffff00">HSI07</div>
<div class="r num" style="right:1546px;top:270px;line-height:22px;color:#ffff00;text-shadow:0.7px 0 0 #ffff00">10</div>
<div class="r nm" style="right:1459px;top:269px;line-height:22px;color:#ffff00">恒指<span class="lt">08</span></div>
<div class="dash" style="left:199px;top:280px"></div>
<div class="dash" style="left:277px;top:280px"></div>
<div class="dash" style="left:355px;top:280px"></div>
<div class="r num" style="right:1174px;top:270px;line-height:22px;color:#ffff00;text-shadow:0.7px 0 0 #ffff00">0</div>
<div class="r num" style="right:1114px;top:270px;line-height:22px;color:#ffff00;text-shadow:0.7px 0 0 #ffff00">0</div>
<div class="r num" style="right:1035px;top:270px;line-height:22px;color:#ffff00;text-shadow:0.7px 0 0 #ffff00">0</div>
<div class="r num" style="right:965px;top:270px;line-height:22px;color:#ffff00;text-shadow:0.7px 0 0 #ffff00">27316</div>
<div class="dash" style="left:693px;top:280px"></div>
<div class="dash" style="left:747px;top:280px"></div>
<div class="dash" style="left:809px;top:280px"></div>
<div class="dash" style="left:879px;top:280px"></div>
<div class="dash" style="left:949px;top:280px"></div>
<div class="dash" style="left:1019px;top:280px"></div>
<div class="r num" style="right:491px;top:270px;line-height:22px;color:#ffff00;text-shadow:0.7px 0 0 #ffff00">00:00:00</div>
<div class="r cd" style="right:422px;top:269px;line-height:22px;color:#ffff00">HSI08</div>
<div class="r num" style="right:1546px;top:292px;line-height:22px;color:#ffff00;text-shadow:0.7px 0 0 #ffff00">11</div>
<div class="r nm" style="right:1459px;top:291px;line-height:22px;color:#ffff00">恒指<span class="lt">09</span></div>
<div class="dash" style="left:199px;top:302px"></div>
<div class="dash" style="left:277px;top:302px"></div>
<div class="dash" style="left:355px;top:302px"></div>
<div class="r num" style="right:1174px;top:292px;line-height:22px;color:#ffff00;text-shadow:0.7px 0 0 #ffff00">0</div>
<div class="r num" style="right:1114px;top:292px;line-height:22px;color:#ffff00;text-shadow:0.7px 0 0 #ffff00">0</div>
<div class="r num" style="right:1035px;top:292px;line-height:22px;color:#ffff00;text-shadow:0.7px 0 0 #ffff00">0</div>
<div class="r num" style="right:965px;top:292px;line-height:22px;color:#ffff00;text-shadow:0.7px 0 0 #ffff00">35902</div>
<div class="dash" style="left:693px;top:302px"></div>
<div class="dash" style="left:747px;top:302px"></div>
<div class="dash" style="left:809px;top:302px"></div>
<div class="dash" style="left:879px;top:302px"></div>
<div class="dash" style="left:949px;top:302px"></div>
<div class="dash" style="left:1019px;top:302px"></div>
<div class="r num" style="right:491px;top:292px;line-height:22px;color:#ffff00;text-shadow:0.7px 0 0 #ffff00">00:00:00</div>
<div class="r cd" style="right:422px;top:291px;line-height:22px;color:#ffff00">HSI09</div>
<div class="r num" style="right:1546px;top:314px;line-height:22px;color:#ffff00;text-shadow:0.7px 0 0 #ffff00">12</div>
<div class="r nm" style="right:1459px;top:313px;line-height:22px;color:#ffff00">恒指<span class="lt">10</span></div>
<div class="dash" style="left:199px;top:324px"></div>
<div class="dash" style="left:277px;top:324px"></div>
<div class="dash" style="left:355px;top:324px"></div>
<div class="r num" style="right:1174px;top:314px;line-height:22px;color:#ffff00;text-shadow:0.7px 0 0 #ffff00">0</div>
<div class="r num" style="right:1114px;top:314px;line-height:22px;color:#ffff00;text-shadow:0.7px 0 0 #ffff00">0</div>
<div class="r num" style="right:1035px;top:314px;line-height:22px;color:#ffff00;text-shadow:0.7px 0 0 #ffff00">0</div>
<div class="r num" style="right:965px;top:314px;line-height:22px;color:#ffff00;text-shadow:0.7px 0 0 #ffff00">32600</div>
<div class="dash" style="left:693px;top:324px"></div>
<div class="dash" style="left:747px;top:324px"></div>
<div class="dash" style="left:809px;top:324px"></div>
<div class="dash" style="left:879px;top:324px"></div>
<div class="dash" style="left:949px;top:324px"></div>
<div class="dash" style="left:1019px;top:324px"></div>
<div class="r num" style="right:491px;top:314px;line-height:22px;color:#ffff00;text-shadow:0.7px 0 0 #ffff00">00:00:00</div>
<div class="r cd" style="right:422px;top:313px;line-height:22px;color:#ffff00">HSI10</div>
<div class="r num" style="right:1546px;top:336px;line-height:22px;color:#ffff00;text-shadow:0.7px 0 0 #ffff00">13</div>
<div class="r nm" style="right:1459px;top:335px;line-height:22px;color:#ffff00">恒指<span class="lt">11</span></div>
<div class="r num" style="right:1390px;top:336px;line-height:22px;color:#ff3c3c;text-shadow:0.7px 0 0 #ff3c3c">22785</div>
<div class="r num" style="right:1311px;top:336px;line-height:22px;color:#ff3c3c;text-shadow:0.7px 0 0 #ff3c3c">22786</div>
<div class="r num" style="right:1233px;top:336px;line-height:22px;color:#ff3c3c;text-shadow:0.7px 0 0 #ff3c3c">22790</div>
<div class="r num" style="right:1174px;top:336px;line-height:22px;color:#ffff00;text-shadow:0.7px 0 0 #ffff00">1</div>
<div class="r num" style="right:1114px;top:336px;line-height:22px;color:#ffff00;text-shadow:0.7px 0 0 #ffff00">2</div>
<div class="r num" style="right:1035px;top:336px;line-height:22px;color:#ffff00;text-shadow:0.7px 0 0 #ffff00">84566</div>
<div class="r num" style="right:965px;top:336px;line-height:22px;color:#ffff00;text-shadow:0.7px 0 0 #ffff00">149914</div>
<div class="r num" style="right:895px;top:336px;line-height:22px;color:#ffffff;text-shadow:0.7px 0 0 #ffffff">22612</div>
<div class="r num" style="right:841px;top:336px;line-height:22px;color:#ff3c3c;text-shadow:0.7px 0 0 #ff3c3c">173</div>
<div class="r num" style="right:779px;top:336px;line-height:22px;color:#ff3c3c;text-shadow:0.7px 0 0 #ff3c3c">0.77</div>
<div class="r num" style="right:710px;top:336px;line-height:22px;color:#ff3c3c;text-shadow:0.7px 0 0 #ff3c3c">22645</div>
<div class="r num" style="right:640px;top:336px;line-height:22px;color:#ff3c3c;text-shadow:0.7px 0 0 #ff3c3c">22875</div>
<div class="r num" style="right:570px;top:336px;line-height:22px;color:#ff3c3c;text-shadow:0.7px 0 0 #ff3c3c">22623</div>
<div class="r num" style="right:491px;top:336px;line-height:22px;color:#ffff00;text-shadow:0.7px 0 0 #ffff00">16:34:59</div>
<div class="r cd" style="right:422px;top:335px;line-height:22px;color:#ffff00">HSI11</div>
<div class="r num" style="right:1546px;top:358px;line-height:22px;color:#ffff00;text-shadow:0.7px 0 0 #ffff00">14</div>
<div class="r nm" style="right:1459px;top:357px;line-height:22px;color:#ffff00">恒指<span class="lt">12</span></div>
<div class="r num" style="right:1390px;top:358px;line-height:22px;color:#ff3c3c;text-shadow:0.7px 0 0 #ff3c3c">22809</div>
<div class="r num" style="right:1311px;top:358px;line-height:22px;color:#ff3c3c;text-shadow:0.7px 0 0 #ff3c3c">22800</div>
<div class="r num" style="right:1233px;top:358px;line-height:22px;color:#ff3c3c;text-shadow:0.7px 0 0 #ff3c3c">22866</div>
<div class="r num" style="right:1174px;top:358px;line-height:22px;color:#ffff00;text-shadow:0.7px 0 0 #ffff00">1</div>
<div class="r num" style="right:1114px;top:358px;line-height:22px;color:#ffff00;text-shadow:0.7px 0 0 #ffff00">1</div>
<div class="r num" style="right:1035px;top:358px;line-height:22px;color:#ffff00;text-shadow:0.7px 0 0 #ffff00">1357</div>
<div class="r num" style="right:965px;top:358px;line-height:22px;color:#ffff00;text-shadow:0.7px 0 0 #ffff00">15128</div>
<div class="r num" style="right:895px;top:358px;line-height:22px;color:#ffffff;text-shadow:0.7px 0 0 #ffffff">22630</div>
<div class="r num" style="right:841px;top:358px;line-height:22px;color:#ff3c3c;text-shadow:0.7px 0 0 #ff3c3c">179</div>
<div class="r num" style="right:779px;top:358px;line-height:22px;color:#ff3c3c;text-shadow:0.7px 0 0 #ff3c3c">0.79</div>
<div class="r num" style="right:710px;top:358px;line-height:22px;color:#ff3c3c;text-shadow:0.7px 0 0 #ff3c3c">22638</div>
<div class="r num" style="right:640px;top:358px;line-height:22px;color:#ff3c3c;text-shadow:0.7px 0 0 #ff3c3c">22885</div>
<div class="r num" style="right:570px;top:358px;line-height:22px;color:#ff3c3c;text-shadow:0.7px 0 0 #ff3c3c">22638</div>
<div class="r num" style="right:491px;top:358px;line-height:22px;color:#ffff00;text-shadow:0.7px 0 0 #ffff00">16:34:59</div>
<div class="r cd" style="right:422px;top:357px;line-height:22px;color:#ffff00">HSI12</div>
<div class="r num" style="right:1546px;top:380px;line-height:22px;color:#ffff00;text-shadow:0.7px 0 0 #ffff00">15</div>
<div class="r nm" style="right:1459px;top:379px;line-height:22px;color:#ffff00"><span class="lt hh"><span>H</span></span>股指数<span class="lt">01</span></div>
<div class="dash" style="left:199px;top:390px"></div>
<div class="dash" style="left:277px;top:390px"></div>
<div class="dash" style="left:355px;top:390px"></div>
<div class="r num" style="right:1174px;top:380px;line-height:22px;color:#ffff00;text-shadow:0.7px 0 0 #ffff00">0</div>
<div class="r num" style="right:1114px;top:380px;line-height:22px;color:#ffff00;text-shadow:0.7px 0 0 #ffff00">0</div>
<div class="r num" style="right:1035px;top:380px;line-height:22px;color:#ffff00;text-shadow:0.7px 0 0 #ffff00">0</div>
<div class="r num" style="right:965px;top:380px;line-height:22px;color:#ffff00;text-shadow:0.7px 0 0 #ffff00">120050</div>
<div class="dash" style="left:693px;top:390px"></div>
<div class="dash" style="left:747px;top:390px"></div>
<div class="dash" style="left:809px;top:390px"></div>
<div class="dash" style="left:879px;top:390px"></div>
<div class="dash" style="left:949px;top:390px"></div>
<div class="dash" style="left:1019px;top:390px"></div>
<div class="r num" style="right:491px;top:380px;line-height:22px;color:#ffff00;text-shadow:0.7px 0 0 #ffff00">00:00:00</div>
<div class="r cd" style="right:422px;top:379px;line-height:22px;color:#ffff00">HHI01</div>
<div class="r num" style="right:1546px;top:402px;line-height:22px;color:#ffff00;text-shadow:0.7px 0 0 #ffff00">16</div>
<div class="r nm" style="right:1459px;top:401px;line-height:22px;color:#ffff00"><span class="lt hh"><span>H</span></span>股指数<span class="lt">02</span></div>
<div class="dash" style="left:199px;top:412px"></div>
<div class="dash" style="left:277px;top:412px"></div>
<div class="dash" style="left:355px;top:412px"></div>
<div class="r num" style="right:1174px;top:402px;line-height:22px;color:#ffff00;text-shadow:0.7px 0 0 #ffff00">0</div>
<div class="r num" style="right:1114px;top:402px;line-height:22px;color:#ffff00;text-shadow:0.7px 0 0 #ffff00">0</div>
<div class="r num" style="right:1035px;top:402px;line-height:22px;color:#ffff00;text-shadow:0.7px 0 0 #ffff00">0</div>
<div class="r num" style="right:965px;top:402px;line-height:22px;color:#ffff00;text-shadow:0.7px 0 0 #ffff00">81252</div>
<div class="dash" style="left:693px;top:412px"></div>
<div class="dash" style="left:747px;top:412px"></div>
<div class="dash" style="left:809px;top:412px"></div>
<div class="dash" style="left:879px;top:412px"></div>
<div class="dash" style="left:949px;top:412px"></div>
<div class="dash" style="left:1019px;top:412px"></div>
<div class="r num" style="right:491px;top:402px;line-height:22px;color:#ffff00;text-shadow:0.7px 0 0 #ffff00">00:00:00</div>
<div class="r cd" style="right:422px;top:401px;line-height:22px;color:#ffff00">HHI02</div>
<div class="r num" style="right:1546px;top:424px;line-height:22px;color:#ffff00;text-shadow:0.7px 0 0 #ffff00">17</div>
<div class="r nm" style="right:1459px;top:423px;line-height:22px;color:#ffff00"><span class="lt hh"><span>H</span></span>股指数<span class="lt">03</span></div>
<div class="r num" style="right:1390px;top:424px;line-height:22px;color:#ff3c3c;text-shadow:0.7px 0 0 #ff3c3c">9649</div>
<div class="r num" style="right:1311px;top:424px;line-height:22px;color:#ff3c3c;text-shadow:0.7px 0 0 #ff3c3c">9621</div>
<div class="r num" style="right:1233px;top:424px;line-height:22px;color:#ff3c3c;text-shadow:0.7px 0 0 #ff3c3c">9630</div>
<div class="r num" style="right:1174px;top:424px;line-height:22px;color:#ffff00;text-shadow:0.7px 0 0 #ffff00">6</div>
<div class="r num" style="right:1114px;top:424px;line-height:22px;color:#ffff00;text-shadow:0.7px 0 0 #ffff00">8</div>
<div class="r num" style="right:1035px;top:424px;line-height:22px;color:#ffff00;text-shadow:0.7px 0 0 #ffff00">83</div>
<div class="r num" style="right:965px;top:424px;line-height:22px;color:#ffff00;text-shadow:0.7px 0 0 #ffff00">22509</div>
<div class="r num" style="right:895px;top:424px;line-height:22px;color:#ffffff;text-shadow:0.7px 0 0 #ffffff">9535</div>
<div class="r num" style="right:841px;top:424px;line-height:22px;color:#ff3c3c;text-shadow:0.7px 0 0 #ff3c3c">114</div>
<div class="r num" style="right:779px;top:424px;line-height:22px;color:#ff3c3c;text-shadow:0.7px 0 0 #ff3c3c">1.20</div>
<div class="r num" style="right:710px;top:424px;line-height:22px;color:#ff3c3c;text-shadow:0.7px 0 0 #ff3c3c">9572</div>
<div class="r num" style="right:640px;top:424px;line-height:22px;color:#ff3c3c;text-shadow:0.7px 0 0 #ff3c3c">9671</div>
<div class="r num" style="right:570px;top:424px;line-height:22px;color:#ff3c3c;text-shadow:0.7px 0 0 #ff3c3c">9570</div>
<div class="r num" style="right:491px;top:424px;line-height:22px;color:#ffff00;text-shadow:0.7px 0 0 #ffff00">16:34:59</div>
<div class="r cd" style="right:422px;top:423px;line-height:22px;color:#ffff00">HHI03</div>
<div class="r num" style="right:1546px;top:446px;line-height:22px;color:#ffff00;text-shadow:0.7px 0 0 #ffff00">18</div>
<div class="r nm" style="right:1459px;top:445px;line-height:22px;color:#ffff00"><span class="lt hh"><span>H</span></span>股指数<span class="lt">04</span></div>
<div class="dash" style="left:199px;top:456px"></div>
<div class="dash" style="left:277px;top:456px"></div>
<div class="dash" style="left:355px;top:456px"></div>
<div class="r num" style="right:1174px;top:446px;line-height:22px;color:#ffff00;text-shadow:0.7px 0 0 #ffff00">0</div>
<div class="r num" style="right:1114px;top:446px;line-height:22px;color:#ffff00;text-shadow:0.7px 0 0 #ffff00">0</div>
<div class="r num" style="right:1035px;top:446px;line-height:22px;color:#ffff00;text-shadow:0.7px 0 0 #ffff00">0</div>
<div class="r num" style="right:965px;top:446px;line-height:22px;color:#ffff00;text-shadow:0.7px 0 0 #ffff00">98570</div>
<div class="dash" style="left:693px;top:456px"></div>
<div class="dash" style="left:747px;top:456px"></div>
<div class="dash" style="left:809px;top:456px"></div>
<div class="dash" style="left:879px;top:456px"></div>
<div class="dash" style="left:949px;top:456px"></div>
<div class="dash" style="left:1019px;top:456px"></div>
<div class="r num" style="right:491px;top:446px;line-height:22px;color:#ffff00;text-shadow:0.7px 0 0 #ffff00">00:00:00</div>
<div class="r cd" style="right:422px;top:445px;line-height:22px;color:#ffff00">HHI04</div>
<div class="r num" style="right:1546px;top:468px;line-height:22px;color:#ffff00;text-shadow:0.7px 0 0 #ffff00">19</div>
<div class="r nm" style="right:1459px;top:467px;line-height:22px;color:#ffff00"><span class="lt hh"><span>H</span></span>股指数<span class="lt">05</span></div>
<div class="dash" style="left:199px;top:478px"></div>
<div class="dash" style="left:277px;top:478px"></div>
<div class="dash" style="left:355px;top:478px"></div>
<div class="r num" style="right:1174px;top:468px;line-height:22px;color:#ffff00;text-shadow:0.7px 0 0 #ffff00">0</div>
<div class="r num" style="right:1114px;top:468px;line-height:22px;color:#ffff00;text-shadow:0.7px 0 0 #ffff00">0</div>
<div class="r num" style="right:1035px;top:468px;line-height:22px;color:#ffff00;text-shadow:0.7px 0 0 #ffff00">0</div>
<div class="r num" style="right:965px;top:468px;line-height:22px;color:#ffff00;text-shadow:0.7px 0 0 #ffff00">76414</div>
<div class="dash" style="left:693px;top:478px"></div>
<div class="dash" style="left:747px;top:478px"></div>
<div class="dash" style="left:809px;top:478px"></div>
<div class="dash" style="left:879px;top:478px"></div>
<div class="dash" style="left:949px;top:478px"></div>
<div class="dash" style="left:1019px;top:478px"></div>
<div class="r num" style="right:491px;top:468px;line-height:22px;color:#ffff00;text-shadow:0.7px 0 0 #ffff00">00:00:00</div>
<div class="r cd" style="right:422px;top:467px;line-height:22px;color:#ffff00">HHI05</div>
<div class="r num" style="right:1546px;top:490px;line-height:22px;color:#ffff00;text-shadow:0.7px 0 0 #ffff00">20</div>
<div class="r nm" style="right:1459px;top:489px;line-height:22px;color:#ffff00"><span class="lt hh"><span>H</span></span>股指数<span class="lt">06</span></div>
<div class="r num" style="right:1390px;top:490px;line-height:22px;color:#ff3c3c;text-shadow:0.7px 0 0 #ff3c3c">9485</div>
<div class="r num" style="right:1311px;top:490px;line-height:22px;color:#00ff00;text-shadow:0.7px 0 0 #00ff00">9097</div>
<div class="r num" style="right:1233px;top:490px;line-height:22px;color:#ff3c3c;text-shadow:0.7px 0 0 #ff3c3c">9748</div>
<div class="r num" style="right:1174px;top:490px;line-height:22px;color:#ffff00;text-shadow:0.7px 0 0 #ffff00">1</div>
<div class="r num" style="right:1114px;top:490px;line-height:22px;color:#ffff00;text-shadow:0.7px 0 0 #ffff00">1</div>
<div class="r num" style="right:1035px;top:490px;line-height:22px;color:#ffff00;text-shadow:0.7px 0 0 #ffff00">12</div>
<div class="r num" style="right:965px;top:490px;line-height:22px;color:#ffff00;text-shadow:0.7px 0 0 #ffff00">919</div>
<div class="r num" style="right:895px;top:490px;line-height:22px;color:#ffffff;text-shadow:0.7px 0 0 #ffffff">9350</div>
<div class="r num" style="right:841px;top:490px;line-height:22px;color:#ff3c3c;text-shadow:0.7px 0 0 #ff3c3c">135</div>
<div class="r num" style="right:779px;top:490px;line-height:22px;color:#ff3c3c;text-shadow:0.7px 0 0 #ff3c3c">1.44</div>
<div class="r num" style="right:710px;top:490px;line-height:22px;color:#ff3c3c;text-shadow:0.7px 0 0 #ff3c3c">9415</div>
<div class="r num" style="right:640px;top:490px;line-height:22px;color:#ff3c3c;text-shadow:0.7px 0 0 #ff3c3c">9485</div>
<div class="r num" style="right:570px;top:490px;line-height:22px;color:#ff3c3c;text-shadow:0.7px 0 0 #ff3c3c">9415</div>
<div class="r num" style="right:491px;top:490px;line-height:22px;color:#ffff00;text-shadow:0.7px 0 0 #ffff00">16:34:59</div>
<div class="r cd" style="right:422px;top:489px;line-height:22px;color:#ffff00">HHI06</div>
<div class="r num" style="right:1546px;top:512px;line-height:22px;color:#ffff00;text-shadow:0.7px 0 0 #ffff00">21</div>
<div class="r nm" style="right:1459px;top:511px;line-height:22px;color:#ffff00"><span class="lt hh"><span>H</span></span>股指数<span class="lt">07</span></div>
<div class="dash" style="left:199px;top:522px"></div>
<div class="dash" style="left:277px;top:522px"></div>
<div class="dash" style="left:355px;top:522px"></div>
<div class="r num" style="right:1174px;top:512px;line-height:22px;color:#ffff00;text-shadow:0.7px 0 0 #ffff00">0</div>
<div class="r num" style="right:1114px;top:512px;line-height:22px;color:#ffff00;text-shadow:0.7px 0 0 #ffff00">0</div>
<div class="r num" style="right:1035px;top:512px;line-height:22px;color:#ffff00;text-shadow:0.7px 0 0 #ffff00">0</div>
<div class="r num" style="right:965px;top:512px;line-height:22px;color:#ffff00;text-shadow:0.7px 0 0 #ffff00">78030</div>
<div class="dash" style="left:693px;top:522px"></div>
<div class="dash" style="left:747px;top:522px"></div>
<div class="dash" style="left:809px;top:522px"></div>
<div class="dash" style="left:879px;top:522px"></div>
<div class="dash" style="left:949px;top:522px"></div>
<div class="dash" style="left:1019px;top:522px"></div>
<div class="r num" style="right:491px;top:512px;line-height:22px;color:#ffff00;text-shadow:0.7px 0 0 #ffff00">00:00:00</div>
<div class="r cd" style="right:422px;top:511px;line-height:22px;color:#ffff00">HHI07</div>
<div class="r num" style="right:1546px;top:534px;line-height:22px;color:#ffff00;text-shadow:0.7px 0 0 #ffff00">22</div>
<div class="r nm" style="right:1459px;top:533px;line-height:22px;color:#ffff00"><span class="lt hh"><span>H</span></span>股指数<span class="lt">08</span></div>
<div class="dash" style="left:199px;top:544px"></div>
<div class="dash" style="left:277px;top:544px"></div>
<div class="dash" style="left:355px;top:544px"></div>
<div class="r num" style="right:1174px;top:534px;line-height:22px;color:#ffff00;text-shadow:0.7px 0 0 #ffff00">0</div>
<div class="r num" style="right:1114px;top:534px;line-height:22px;color:#ffff00;text-shadow:0.7px 0 0 #ffff00">0</div>
<div class="r num" style="right:1035px;top:534px;line-height:22px;color:#ffff00;text-shadow:0.7px 0 0 #ffff00">0</div>
<div class="r num" style="right:965px;top:534px;line-height:22px;color:#ffff00;text-shadow:0.7px 0 0 #ffff00">59572</div>
<div class="dash" style="left:693px;top:544px"></div>
<div class="dash" style="left:747px;top:544px"></div>
<div class="dash" style="left:809px;top:544px"></div>
<div class="dash" style="left:879px;top:544px"></div>
<div class="dash" style="left:949px;top:544px"></div>
<div class="dash" style="left:1019px;top:544px"></div>
<div class="r num" style="right:491px;top:534px;line-height:22px;color:#ffff00;text-shadow:0.7px 0 0 #ffff00">00:00:00</div>
<div class="r cd" style="right:422px;top:533px;line-height:22px;color:#ffff00">HHI08</div>
<div class="a" style="left:1581px;top:64px;width:17px;height:487px;background:#f0f0f0"></div>
<div class="a" style="left:1581px;top:49px;width:17px;height:15px;border:1px solid #60b0ff;background:#000"></div>
<div class="a" style="left:1584px;top:52px;width:11px;height:9px;border:1px solid #60b0ff;border-top-width:2px"></div>
<svg class="a" style="left:1585px;top:70px" width="9" height="6" viewBox="0 0 9 6"><path d="M0 5 L4.5 0.5 L9 5Z" fill="#404040"/></svg>
<div class="a" style="left:1582px;top:82px;width:15px;height:155px;border:1px solid #b0b0b0;border-radius:2px;background:linear-gradient(90deg,#f8f8f8,#e8e8e8 40%,#c8c8c8)"></div>
<div class="a" style="left:1586px;top:155px;width:7px;height:6px;border-top:1px solid #707070;border-bottom:1px solid #707070"></div>
<div class="a" style="left:1586px;top:158px;width:7px;height:1px;background:#707070"></div>
<svg class="a" style="left:1585px;top:540px" width="9" height="6" viewBox="0 0 9 6"><path d="M0 1 L4.5 5.5 L9 1Z" fill="#404040"/></svg>
<div class="a" style="left:20px;top:551px;width:1578px;height:23px;background:linear-gradient(#ececec,#e4e4e4 35%,#c8c8c8)"></div>
<div class="a" style="left:20px;top:551px;width:60px;height:20px;background:linear-gradient(#8c8c8c,#5e5e5e)"></div>
<div class="a" style="left:32px;top:555px;line-height:14px;font-size:12px;color:#fff">港交所</div>
<div class="a" style="left:91px;top:555px;line-height:14px;font-size:12px;color:#000"><span class="tl">CME</span>能源</div>
<div class="a" style="left:157px;top:555px;line-height:14px;font-size:12px;color:#000"><span class="tl">CME</span>金属</div>
<div class="a" style="left:223px;top:555px;line-height:14px;font-size:12px;color:#000"><span class="tl">CME</span>外汇</div>
<div class="a" style="left:289px;top:555px;line-height:14px;font-size:12px;color:#000"><span class="tl">CME</span>指数</div>
<div class="a" style="left:355px;top:555px;line-height:14px;font-size:12px;color:#000"><span class="tl">CME</span>农业</div>
<div class="a" style="left:421px;top:555px;line-height:14px;font-size:12px;color:#000"><span class="tl">ICE</span>美国</div>
<div class="a" style="left:487px;top:555px;line-height:14px;font-size:12px;color:#000"><span class="tl">ICE</span>欧洲</div>
<div class="a" style="left:553px;top:555px;line-height:14px;font-size:12px;color:#000"><span class="tl">Eurex</span></div>
<div class="a" style="left:607px;top:555px;line-height:14px;font-size:12px;color:#000"><span class="tl">SGX-A50</span></div>
<div class="a" style="left:673px;top:555px;line-height:14px;font-size:12px;color:#000"><span class="tl">SGX-</span>日经</div>
<div class="a" style="left:745px;top:555px;line-height:14px;font-size:12px;color:#000"><span class="tl">LME</span></div>
<div class="a" style="left:787px;top:555px;line-height:14px;font-size:12px;color:#000">我的板块</div>
<div class="a" style="left:145px;top:556px;width:1px;height:11px;background:#8a8a8a"></div>
<div class="a" style="left:211px;top:556px;width:1px;height:11px;background:#8a8a8a"></div>
<div class="a" style="left:277px;top:556px;width:1px;height:11px;background:#8a8a8a"></div>
<div class="a" style="left:343px;top:556px;width:1px;height:11px;background:#8a8a8a"></div>
<div class="a" style="left:409px;top:556px;width:1px;height:11px;background:#8a8a8a"></div>
<div class="a" style="left:475px;top:556px;width:1px;height:11px;background:#8a8a8a"></div>
<div class="a" style="left:541px;top:556px;width:1px;height:11px;background:#8a8a8a"></div>
<div class="a" style="left:595px;top:556px;width:1px;height:11px;background:#8a8a8a"></div>
<div class="a" style="left:661px;top:556px;width:1px;height:11px;background:#8a8a8a"></div>
<div class="a" style="left:733px;top:556px;width:1px;height:11px;background:#8a8a8a"></div>
<div class="a" style="left:775px;top:556px;width:1px;height:11px;background:#8a8a8a"></div>
<div class="a" style="left:847px;top:556px;width:1px;height:11px;background:#8a8a8a"></div>
<div class="a" style="left:0;top:574px;width:1598px;height:4px;background:#ebebeb"></div>
<div class="a" style="left:20px;top:573px;width:1578px;height:1px;background:#d6cccc"></div>
<div class="a" style="left:0;top:578px;width:1600px;height:234px;background:#fff"></div>
<div class="a" style="left:0;top:578px;width:1599px;height:234px;background:#fff;border-top:1px solid #a0a0a0;border-left:1px solid #999;border-right:1px solid #999"></div>
<div class="a" style="left:529px;top:589px;line-height:14px;font-size:12px">交易站点:</div>
<div class="a" style="left:529px;top:616px;width:160px;height:119px;border:1px solid #7f9db9;background:#fff"></div>
<div class="a" style="left:530px;top:617px;width:158px;height:12px;background:#3399ff"></div>
<div class="a" style="left:531px;top:615px;line-height:14px;font-size:12px;color:#fff">电信</div>
<div class="a" style="left:531px;top:628px;line-height:14px;font-size:12px;color:#000">联通</div>
<div class="a" style="left:704px;top:589px;line-height:14px;font-size:12px;letter-spacing:0">交易席位:</div>
<div class="a" style="left:704px;top:619px;line-height:14px;font-size:12px;letter-spacing:1.33px">客 户 号:</div>
<div class="a" style="left:704px;top:649px;line-height:14px;font-size:12px;letter-spacing:0">交易密码:</div>
<div class="a" style="left:704px;top:679px;line-height:14px;font-size:12px;letter-spacing:0">安全方式:</div>
<div class="a" style="left:763px;top:586px;width:160px;height:20px;border:1px solid #7f9db9;background:#fff"></div>
<div class="a" style="left:765px;top:588px;width:143px;height:16px;background:linear-gradient(#f0f8fe,#cfeaf8 45%,#a8daf4)"></div>
<div class="a" style="left:767px;top:589px;line-height:14px;font-family:'Liberation Serif';font-size:12px;font-weight:normal">VIP</div>
<div class="a" style="left:907px;top:587px;width:15px;height:18px;border-left:1px solid #7f9db9;background:#e1ecfa"></div>
<svg class="a" style="left:910px;top:592px" width="9" height="7" viewBox="0 0 9 7"><path d="M1 1.5 L4.5 5 L8 1.5" stroke="#4d6185" stroke-width="2" fill="none"/></svg>
<div class="a" style="left:763px;top:616px;width:160px;height:20px;border:1px solid #7f9db9;background:#fff"></div>
<div class="a" style="left:907px;top:617px;width:15px;height:18px;border-left:1px solid #7f9db9;background:#b9cdf6"></div>
<svg class="a" style="left:910px;top:622px" width="9" height="7" viewBox="0 0 9 7"><path d="M1 1.5 L4.5 5 L8 1.5" stroke="#4d6185" stroke-width="2" fill="none"/></svg>
<div class="a" style="left:763px;top:646px;width:160px;height:20px;border:1px solid #7f9db9;background:#fff"></div>
<div class="a" style="left:763px;top:676px;width:76px;height:20px;border:1px solid #7f9db9;background:#fff"></div>
<div class="a" style="left:765px;top:678px;width:59px;height:16px;background:linear-gradient(#fafafa,#e8e8e8 50%,#cdcdcd)"></div>
<div class="a" style="left:766px;top:679px;line-height:15px;font-size:13px">验证码</div>
<div class="a" style="left:823px;top:677px;width:15px;height:18px;border-left:1px solid #7f9db9;background:#b9cdf6"></div>
<svg class="a" style="left:826px;top:682px" width="9" height="7" viewBox="0 0 9 7"><path d="M1 1.5 L4.5 5 L8 1.5" stroke="#4d6185" stroke-width="2" fill="none"/></svg>
<div class="a" style="left:849px;top:676px;width:74px;height:20px;border:1px solid #7f9db9;background:#fff"></div>
<div class="a" style="left:936px;top:619px;width:13px;height:13px;border:1px solid #1c5180;background:linear-gradient(135deg,#dcdcd7,#fff)"></div>
<svg class="a" style="left:938px;top:621px" width="9" height="9" viewBox="0 0 9 9"><path d="M1 4 L3.5 6.5 L8 1.5" stroke="#21a121" stroke-width="2" fill="none"/></svg>
<div class="a" style="left:954px;top:618px;line-height:14px;font-size:12px">保存客户号</div>
<div class="a" style="left:1021px;top:618px;line-height:14px;font-size:12px;color:#0000ff">清空</div>
<div class="a" style="left:936px;top:647px;width:56px;height:18px;border:1px solid #b8d4f8;border-radius:2px;background:#f6f9ff"></div>
<svg class="a" style="left:939px;top:649px" width="17" height="13" viewBox="0 0 17 13"><path d="M5 4 V1.5 H11" stroke="#6a8cc0" stroke-width="0.9" fill="none"/><rect x="0.5" y="4.5" width="15" height="8" rx="1.5" fill="#eef4fc" stroke="#6a8cc0" stroke-width="1"/><path d="M2.5 7h11M2.5 9.5h11" stroke="#8aa8d8" stroke-width="1" stroke-dasharray="1 1"/></svg>
<div class="a" style="left:957px;top:650px;line-height:13px;font-size:11px;color:#5a80b8">软键盘</div>
<div class="a" style="left:939px;top:668px;width:14px;text-align:center;line-height:22px;font-family:'Liberation Sans';font-size:23px;color:#c82800;transform:scaleX(0.95) rotate(-3deg);transform-origin:50% 50%">5</div>
<div class="a" style="left:963px;top:666px;width:14px;text-align:center;line-height:22px;font-family:'Liberation Sans';font-size:23px;color:#b04800;transform:scaleX(0.95) rotate(-8deg);transform-origin:50% 50%">6</div>
<div class="a" style="left:982px;top:669px;width:14px;text-align:center;line-height:22px;font-family:'Liberation Sans';font-size:23px;color:#787818;transform:scaleX(0.95) rotate(10deg);transform-origin:50% 50%">0</div>
<div class="a" style="left:1001px;top:669px;width:14px;text-align:center;line-height:22px;font-family:'Liberation Sans';font-size:23px;color:#a81010;transform:scaleX(0.95) rotate(-8deg);transform-origin:50% 50%">5</div>
<div class="a" style="left:789px;top:713px;width:68px;height:22px;border:1px solid #003c74;border-radius:3px;background:linear-gradient(#ffffff,#f0efea 70%,#e0ded6);box-shadow:inset 0 0 0 1px #a8c8f8, inset 0 -1px 0 2px #7ea6e8"></div>
<div class="a" style="left:811px;top:717px;line-height:14px;font-size:12px">登录</div>
<div class="a" style="left:863px;top:713px;width:60px;height:22px;border:1px solid #003c74;border-radius:3px;background:linear-gradient(#ffffff,#f0efea 70%,#e0ded6)"></div>
<div class="a" style="left:881px;top:717px;line-height:14px;font-size:12px">退出</div>
<div class="a" style="left:529px;top:749px;line-height:14px;font-size:12px;color:#0000e0">电信、联通用户请分别登录电信、联通站点。</div>
<svg class="a" style="left:0;top:0" width="1600" height="812" viewBox="0 0 1600 812"><ellipse cx="835.2" cy="649.6" rx="171.2" ry="106.1" fill="none" stroke="#f53535" stroke-width="3.4"/></svg>
</body></html>
